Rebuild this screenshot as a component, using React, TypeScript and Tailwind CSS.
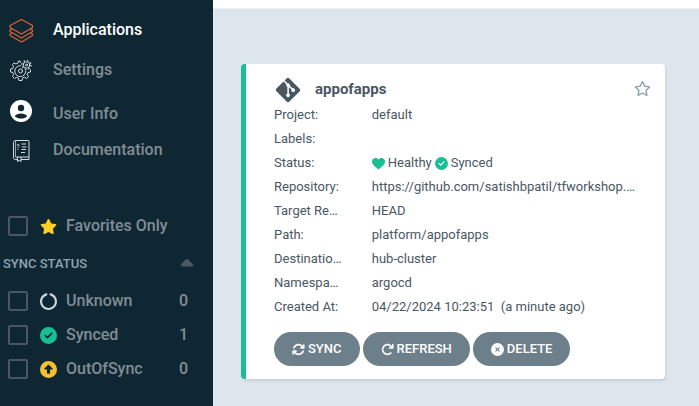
import type { ReactNode } from "react";
import {
  FaArrowRotateRight,
  FaArrowsRotate,
  FaCaretUp,
  FaCircleCheck,
  FaCircleNotch,
  FaCircleUp,
  FaCircleXmark,
  FaGitAlt,
  FaHeart,
  FaRegStar,
  FaStar,
} from "react-icons/fa6";

function StackIcon() {
  return (
    <svg width="25" height="26" viewBox="0 0 25 26" fill="none" stroke="#e0643a" strokeWidth="1.1" strokeLinejoin="round" aria-hidden="true">
      <path d="M12.500 2.500 23.500 8.500v2L12.500 17 1 10.500v-2z" />
      <path d="M3 12l-2 1v1.500L12.500 21l11-6.500V13l-2-1" />
      <path d="M3 16l-2 1v1.500L12.500 25l11-6.500V17l-2-1" />
    </svg>
  );
}

function GearsIcon() {
  return (
    <svg width="24" height="26" viewBox="0 0 24 26" fill="none" stroke="#d5dde1" strokeWidth="1" strokeLinejoin="round" strokeLinecap="round" aria-hidden="true">
      <path d="M11.500 5.500 11 4H9.500L9 6 7 7 5 6 3.500 7.500 4.500 9.500 3.800 11.500 1.500 12v3l2.300.5.8 2L3.500 19.500 5.500 21.500l2-1.200 1.800.7.700 2.500h3l.6-2.500 2-.8 2 1.300 1.900-2-1.300-2 .8-2 2.500-.5V13" />
      <path d="M11.500 8.600A5.500 5.500 0 1 0 16.800 14" />
      <circle cx="11.500" cy="14" r="2" />
      <circle cx="17.500" cy="8" r="3.300" />
      <circle cx="17.500" cy="8" r="1" />
      <circle cx="17.500" cy="8" r="4.500" strokeWidth="1.300" strokeLinecap="butt" strokeDasharray="1.500 2.030" />
    </svg>
  );
}

function UserIcon() {
  return (
    <svg width="24" height="30" viewBox="0 0 24 30" aria-hidden="true">
      <circle cx="12" cy="12" r="11" fill="#fff" />
      <circle cx="12" cy="9" r="3.200" fill="#0f2733" />
      <path d="M5.800 17.200c1-1.800 3.500-2.700 6.200-2.700s5.200.9 6.200 2.700c-1.500 1.500-3.700 2.300-6.200 2.300s-4.700-.8-6.200-2.300z" fill="#0f2733" />
    </svg>
  );
}

function BookIcon() {
  return (
    <svg width="24" height="26" viewBox="0 0 24 26" fill="none" stroke="#d5dde1" strokeWidth="1" strokeLinejoin="round" aria-hidden="true">
      <path d="M6.500 20H20V4.500c0-.6-.4-1-1-1H6.500c-1.200 0-2 .8-2 2v15.300c0 1.200.8 1.700 2 1.700H8M12 22.500h8V20" />
      <path d="M6.500 4v16" strokeWidth=".7" />
      <path d="M8.500 20v4.500l1.700-1.200 1.800 1.200V20" />
      <path d="M12.500 7H17M13 10h4.500M12.500 12.500H17M12 15.500h4" />
      <path d="M7.800 8.500c.2-1.600 2.700-1.300 2.300.2-.2.700-1.200.8-1.200 2M8.900 11.800v1" />
    </svg>
  );
}

function NavLink({ icon, label, active, row }: { icon: ReactNode; label: string; active?: boolean; row: string }) {
  return (
    <a href="#" className={`flex items-center ${row} ${active ? "text-white" : "text-[#818d94]"}`}>
      <span className="flex w-[53px] pl-[9px]">{icon}</span>
      <span>{label}</span>
    </a>
  );
}

function Filter({ icon, label, count }: { icon: ReactNode; label: string; count?: number }) {
  return (
    <label className="flex h-[34px] items-center pr-[25px] pl-2">
      <input type="checkbox" className="size-5 shrink-0 appearance-none rounded-xs border-2 border-[#495763]" />
      <span className="flex w-[38px] pl-3 text-[17px]">{icon}</span>
      <span className="flex-1">{label}</span>
      {count !== undefined && <span>{count}</span>}
    </label>
  );
}

function Field({ label, children }: { label: string; children?: ReactNode }) {
  return (
    <div className="grid h-6 grid-cols-[25%_75%] items-center">
      <dt className="truncate pr-[30px]">{label}</dt>
      <dd className="truncate pr-[29px]">{children}</dd>
    </div>
  );
}

function ActionButton({ icon, label }: { icon: ReactNode; label: string }) {
  return (
    <button type="button" className="flex h-[34px] items-center gap-[3px] rounded-full bg-[#6d7f8b] px-[18px] text-[13px] font-medium text-white">
      {icon}
      {label}
    </button>
  );
}

export default function App() {
  return (
    <div className="flex min-h-screen bg-[#dee6ed] font-[Roboto,sans-serif]">
      <aside className="w-[213px] shrink-0 bg-[#0f2733] text-base font-medium text-[#818d94]">
        <nav className="flex flex-col pt-2.5">
          <NavLink row="h-10" icon={<StackIcon />} label="Applications" active />
          <NavLink row="h-10" icon={<GearsIcon />} label="Settings" />
          <NavLink row="h-12" icon={<UserIcon />} label="User Info" />
          <NavLink row="h-6" icon={<BookIcon />} label="Documentation" />
        </nav>
        <div className="pt-[47px]">
          <Filter icon={<FaStar className="text-[#ffce25]" />} label="Favorites Only" />
          <button type="button" className="flex h-[41px] w-full items-center justify-between pr-4 pl-[3px] text-[13px] font-medium text-[#8fa4b1]">
            SYNC STATUS
            <FaCaretUp className="size-5 text-[#495763]" />
          </button>
          <Filter icon={<FaCircleNotch className="text-[#ccd6dd]" />} label="Unknown" count={0} />
          <Filter icon={<FaCircleCheck className="text-[#18be94]" />} label="Synced" count={1} />
          <Filter icon={<FaCircleUp className="text-[#f4c030]" />} label="OutOfSync" count={0} />
        </div>
      </aside>
      <div className="min-w-0 flex-1">
        <header className="h-[9px] border-b border-[#eef2f5] bg-white" />
        <main className="pt-[55px] pr-[34px] pb-[27px] pl-7">
          <article className="rounded border-l-5 border-[#18be94] bg-white pt-3 pb-[13px] pl-7 text-[13px] text-[#495763] shadow-[1px_2px_3px_rgba(0,0,0,0.1)]">
            <div className="flex h-[27px] items-center pr-3.5">
              <FaGitAlt className="size-7" />
              <h2 className="flex-1 pl-[13px] text-[15px] font-bold">appofapps</h2>
              <button type="button" aria-label="Add to favorites" className="flex pb-0.5">
                <FaRegStar className="size-[17px] text-[#8fa4b1]" />
              </button>
            </div>
            <dl>
              <Field label="Project:">default</Field>
              <Field label="Labels:" />
              <Field label="Status:">
                <span className="flex items-center gap-[3px]">
                  <FaHeart className="text-[#18be94]" />
                  Healthy
                  <FaCircleCheck className="text-[#18be94]" />
                  Synced
                </span>
              </Field>
              <Field label="Repository:">https://github.com/satishbpatil/tfworkshop.git</Field>
              <Field label="Target Revision:">HEAD</Field>
              <Field label="Path:">platform/appofapps</Field>
              <Field label="Destination:">hub-cluster</Field>
              <Field label="Namespace:">argocd</Field>
              <Field label="Created At:">04/22/2024 10:23:51 &nbsp;(a minute ago)</Field>
            </dl>
            <div className="flex gap-[3px] pt-[13px]">
              <ActionButton icon={<FaArrowsRotate />} label="SYNC" />
              <ActionButton icon={<FaArrowRotateRight />} label="REFRESH" />
              <ActionButton icon={<FaCircleXmark />} label="DELETE" />
            </div>
          </article>
        </main>
      </div>
    </div>
  );
}
